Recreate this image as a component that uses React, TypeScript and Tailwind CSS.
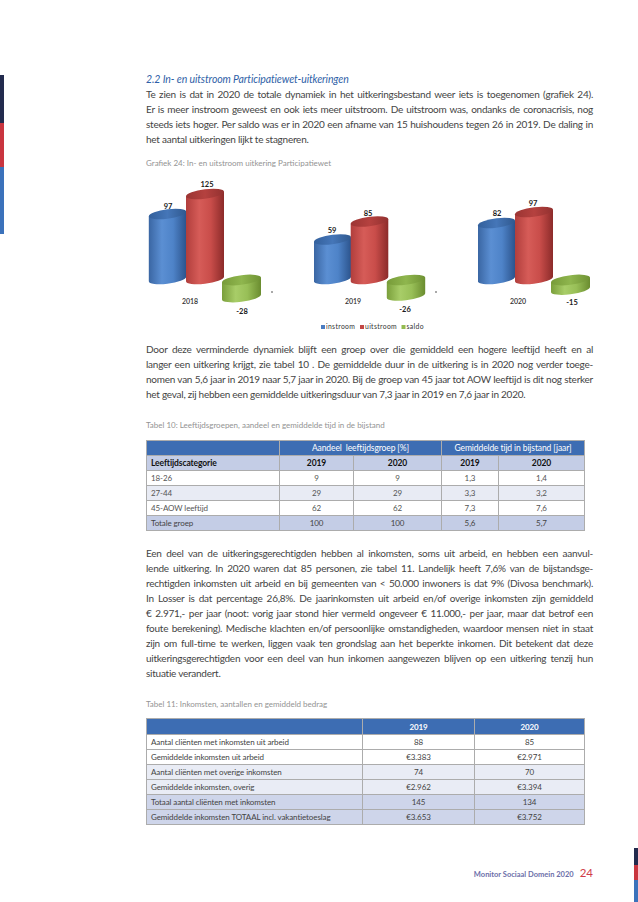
import React from "react";

const p1 = [
  "Te zien is dat in 2020 de totale dynamiek in het uitkeringsbestand weer iets is toegenomen (grafiek 24).",
  "Er is meer instroom geweest en ook iets meer uitstroom. De uitstroom was, ondanks de coronacrisis, nog",
  "steeds iets hoger. Per saldo was er in 2020 een afname van 15 huishoudens tegen 26 in 2019. De daling in",
  "het aantal uitkeringen lijkt te stagneren.",
];
const p2 = [
  "Door deze verminderde dynamiek blijft een groep over die gemiddeld een hogere leeftijd heeft en al",
  "langer een uitkering krijgt, zie tabel 10 . De gemiddelde duur in de uitkering is in 2020 nog verder toege-",
  "nomen van 5,6 jaar in 2019 naar 5,7 jaar in 2020. Bij de groep van 45 jaar tot AOW leeftijd is dit nog sterker",
  "het geval, zij hebben een gemiddelde uitkeringsduur van 7,3 jaar in 2019 en 7,6 jaar in 2020.",
];
const p3 = [
  "Een deel van de uitkeringsgerechtigden hebben al inkomsten, soms uit arbeid, en hebben een aanvul-",
  "lende uitkering. In 2020 waren dat 85 personen, zie tabel 11. Landelijk heeft 7,6% van de bijstandsge-",
  "rechtigden inkomsten uit arbeid en bij gemeenten van < 50.000 inwoners is dat 9% (Divosa benchmark).",
  "In Losser is dat percentage 26,8%. De jaarinkomsten uit arbeid en/of overige inkomsten zijn gemiddeld",
  "€ 2.971,- per jaar (noot: vorig jaar stond hier vermeld ongeveer € 11.000,- per jaar, maar dat betrof een",
  "foute berekening). Medische klachten en/of persoonlijke omstandigheden, waardoor mensen niet in staat",
  "zijn om full-time te werken, liggen vaak ten grondslag aan het beperkte inkomen. Dit betekent dat deze",
  "uitkeringsgerechtigden voor een deel van hun inkomen aangewezen blijven op een uitkering tenzij hun",
  "situatie verandert.",
];

function Para({ lines, className }: { lines: string[]; className?: string }) {
  return (
    <div className={"text-justify text-[10px] leading-[15px] tracking-[-0.25px] text-[#444444] " + (className ?? "")}>
      {lines.map((l, i) => (
        <span key={i} className={i < lines.length - 1 ? "block [text-align-last:justify]" : "block"}>
          {l}
        </span>
      ))}
    </div>
  );
}

type Kind = "b" | "r" | "g";

function Cyl({ cx, rx, top, bottom, kind }: { cx: number; rx: number; top: number; bottom: number; kind: Kind }) {
  const ry = 4.8;
  const my = (top + bottom) / 2;
  return (
    <g transform={`translate(${cx} ${my}) skewY(-7) translate(${-cx} ${-my})`}>
      <path
        d={`M${cx - rx} ${top} L${cx - rx} ${bottom} A${rx} ${ry} 0 0 0 ${cx + rx} ${bottom} L${cx + rx} ${top} Z`}
        fill={`url(#body-${kind})`}
      />
      <ellipse cx={cx} cy={top} rx={rx} ry={ry} fill={`url(#top-${kind})`} />
    </g>
  );
}

function Chart() {
  const val = "font-bold";
  return (
    <svg width="449" height="174" viewBox="0 0 449 174" className="block">
      <defs>
        <linearGradient id="body-b" x1="0" x2="1" y1="0" y2="0">
          <stop offset="0" stopColor="#3a66a3" />
          <stop offset="0.35" stopColor="#5b8fd3" />
          <stop offset="0.65" stopColor="#4e83c8" />
          <stop offset="1" stopColor="#2c548d" />
        </linearGradient>
        <linearGradient id="top-b" x1="0" x2="1" y1="0" y2="0">
          <stop offset="0" stopColor="#33609c" />
          <stop offset="0.5" stopColor="#4576b8" />
          <stop offset="1" stopColor="#30598f" />
        </linearGradient>
        <linearGradient id="body-r" x1="0" x2="1" y1="0" y2="0">
          <stop offset="0" stopColor="#b13e3c" />
          <stop offset="0.35" stopColor="#d65c58" />
          <stop offset="0.65" stopColor="#c94d4a" />
          <stop offset="1" stopColor="#8c2b2a" />
        </linearGradient>
        <linearGradient id="top-r" x1="0" x2="1" y1="0" y2="0">
          <stop offset="0" stopColor="#9b3533" />
          <stop offset="0.5" stopColor="#b5413f" />
          <stop offset="1" stopColor="#923130" />
        </linearGradient>
        <linearGradient id="body-g" x1="0" x2="1" y1="0" y2="0">
          <stop offset="0" stopColor="#7a9f3b" />
          <stop offset="0.35" stopColor="#a8cd68" />
          <stop offset="0.65" stopColor="#98bf57" />
          <stop offset="1" stopColor="#6a8c2f" />
        </linearGradient>
        <linearGradient id="top-g" x1="0" x2="1" y1="0" y2="0">
          <stop offset="0" stopColor="#779b39" />
          <stop offset="0.5" stopColor="#8fb64e" />
          <stop offset="1" stopColor="#6f9234" />
        </linearGradient>
      </defs>

      {/* 2018 */}
      <Cyl cx={21.5} rx={18.7} top={46} bottom={111} kind="b" />
      <Cyl cx={59} rx={19} top={26} bottom={111} kind="r" />
      <Cyl cx={95.5} rx={19.5} top={112} bottom={129} kind="g" />
      {/* 2019 */}
      <Cyl cx={186.5} rx={18.5} top={71.5} bottom={111} kind="b" />
      <Cyl cx={223.5} rx={18.8} top={53.5} bottom={111} kind="r" />
      <Cyl cx={260} rx={19.2} top={112} bottom={127.5} kind="g" />
      {/* 2020 */}
      <Cyl cx={350.5} rx={18.5} top={55} bottom={111} kind="b" />
      <Cyl cx={388} rx={19} top={44} bottom={111} kind="r" />
      <Cyl cx={424.5} rx={19.5} top={112} bottom={121.5} kind="g" />

      <g fontSize="7.5" fill="#1a1a1a" textAnchor="middle" style={{ fontFamily: "Lato, sans-serif" }}>
        <text x="22" y="40.5" className={val}>97</text>
        <text x="61" y="18.5" className={val}>125</text>
        <text x="96" y="145.5" className={val}>-28</text>
        <text x="186" y="64.5" className={val}>59</text>
        <text x="222" y="47.5" className={val}>85</text>
        <text x="259" y="143.5" className={val}>-26</text>
        <text x="351" y="47.5" className={val}>82</text>
        <text x="387" y="37.5" className={val}>97</text>
        <text x="426" y="136.5" className={val}>-15</text>
        <g fill="#333333" fontSize="7" className="font-semibold">
          <text x="44" y="135.5">2018</text>
          <text x="207" y="135.5">2019</text>
          <text x="372" y="135.5">2020</text>
        </g>
      </g>
      <rect x="125.5" y="123" width="1" height="2" fill="#555" />
      <rect x="289.5" y="123" width="1" height="2" fill="#555" />

      {/* legend */}
      <g fontSize="6.8" fill="#333" style={{ fontFamily: "Lato, sans-serif", letterSpacing: "0.35px" }}>
        <rect x="175" y="157" width="4" height="4" fill="#4a7cc2" />
        <text x="180" y="161.3">instroom</text>
        <rect x="214" y="157" width="4" height="4" fill="#c34644" />
        <text x="219" y="161.3">uitstroom</text>
        <rect x="255.5" y="157" width="4" height="4" fill="#93bb50" />
        <text x="260.5" y="161.3">saldo</text>
      </g>
    </svg>
  );
}

const cell = "border border-[#acacac] p-0 h-[15px] leading-[14px] align-middle";

function Table10() {
  const rows = [
    ["18-26", "9", "9", "1,3", "1,4"],
    ["27-44", "29", "29", "3,3", "3,2"],
    ["45-AOW leeftijd", "62", "62", "7,3", "7,6"],
  ];
  const rowBg = ["bg-white", "bg-[#e8ebf4]", "bg-white"];
  return (
    <table className="table-fixed w-[438px] border-collapse text-[8px] tracking-[-0.1px]">
      <colgroup>
        <col className="w-[133px]" />
        <col className="w-[74px]" />
        <col className="w-[88px]" />
        <col className="w-[57px]" />
        <col className="w-[86px]" />
      </colgroup>
      <tbody>
        <tr className="bg-[#3d6db3] text-white">
          <td className={cell}></td>
          <td colSpan={2} className={cell + " text-center text-[8.5px]"}>Aandeel&nbsp; leeftijdsgroep [%]</td>
          <td colSpan={2} className={cell + " text-center text-[8.5px]"}>Gemiddelde tijd in bijstand [jaar]</td>
        </tr>
        <tr className="bg-[#c4cde6] text-[#111] font-bold text-[8.5px]">
          <td className={cell + " pl-[4px]"}>Leeftijdscategorie</td>
          <td className={cell + " text-center"}>2019</td>
          <td className={cell + " text-center"}>2020</td>
          <td className={cell + " text-center"}>2019</td>
          <td className={cell + " text-center"}>2020</td>
        </tr>
        {rows.map((r, i) => (
          <tr key={i} className={rowBg[i] + " text-[#555]"}>
            <td className={cell + " pl-[4px]"}>{r[0]}</td>
            {r.slice(1).map((v, j) => (
              <td key={j} className={cell + " text-center"}>{v}</td>
            ))}
          </tr>
        ))}
        <tr className="bg-[#c4cde6] text-[#444]">
          <td className={cell + " pl-[4px]"}>Totale groep</td>
          <td className={cell + " text-center"}>100</td>
          <td className={cell + " text-center"}>100</td>
          <td className={cell + " text-center"}>5,6</td>
          <td className={cell + " text-center"}>5,7</td>
        </tr>
      </tbody>
    </table>
  );
}

function Table11() {
  const rows: [string, string, string, string][] = [
    ["Aantal cliënten met inkomsten uit arbeid", "88", "85", "bg-white"],
    ["Gemiddelde inkomsten uit arbeid", "€3.383", "€2.971", "bg-white"],
    ["Aantal cliënten met overige inkomsten", "74", "70", "bg-[#e9ecf5]"],
    ["Gemiddelde inkomsten, overig", "€2.962", "€3.394", "bg-[#e9ecf5]"],
    ["Totaal aantal cliënten met inkomsten", "145", "134", "bg-[#ced5ea]"],
    ["Gemiddelde inkomsten TOTAAL incl. vakantietoeslag", "€3.653", "€3.752", "bg-[#ced5ea]"],
  ];
  return (
    <table className="table-fixed w-[438px] border-collapse text-[8px] tracking-[-0.1px]">
      <colgroup>
        <col className="w-[216px]" />
        <col className="w-[112px]" />
        <col className="w-[110px]" />
      </colgroup>
      <tbody>
        <tr className="bg-[#3d6db3] text-white font-bold">
          <td className={cell + " h-[16px]"}></td>
          <td className={cell + " h-[16px] text-center"}>2019</td>
          <td className={cell + " h-[16px] text-center"}>2020</td>
        </tr>
        {rows.map((r, i) => (
          <tr key={i} className={r[3] + " text-[#444]"}>
            <td className={cell + " pl-[4px]"}>{r[0]}</td>
            <td className={cell + " text-center"}>{r[1]}</td>
            <td className={cell + " text-center"}>{r[2]}</td>
          </tr>
        ))}
      </tbody>
    </table>
  );
}

export default function App() {
  return (
    <div className="w-[638px] h-[902px] bg-white flex flex-col overflow-hidden [font-family:Lato,sans-serif]">
      <div className="flex flex-1 min-h-0">
        <div className="w-[4px] pt-[75px] flex flex-col shrink-0">
          <div className="h-[48px] bg-[#232b4e]" />
          <div className="h-[44px] bg-[#c9353f]" />
          <div className="h-[67px] bg-[#3b72bb]" />
        </div>
        <div className="ml-[142px] w-[447px] pt-[72px] flex flex-col">
          <h2 className="italic text-[10.5px] leading-[15px] tracking-[-0.1px] text-[#2f5fa7] font-normal">
            2.2 In- en uitstroom Participatiewet-uitkeringen
          </h2>
          <Para lines={p1} />
          <div className="mt-[11px] text-[8px] leading-[10px] text-[#939393]">
            Grafiek 24: In- en uitstroom uitkering Participatiewet
          </div>
          <Chart />
          <Para lines={p2} />
          <div className="mt-[18px] text-[8px] leading-[10px] text-[#939393]">
            Tabel 10: Leeftijdsgroepen, aandeel en gemiddelde tijd in de bijstand
          </div>
          <div className="mt-[10px]">
            <Table10 />
          </div>
          <Para lines={p3} className="mt-[15px]" />
          <div className="mt-[18px] text-[8px] leading-[10px] text-[#939393]">
            Tabel 11: Inkomsten, aantallen en gemiddeld bedrag
          </div>
          <div className="mt-[9px]">
            <Table11 />
          </div>
        </div>
      </div>
      <div className="flex h-[54px] justify-end shrink-0">
        <div className="self-center flex items-baseline gap-[6px] mr-[41px] -mt-[4px]">
          <span className="text-[7.5px] font-bold text-[#6c6fa9]">Monitor Sociaal Domein 2020</span>
          <span className="text-[11.5px] text-[#d03c48]">24</span>
        </div>
        <div className="w-[4px] flex flex-col">
          <div className="h-[17px] bg-[#232b4e]" />
          <div className="h-[15px] bg-[#c9353f]" />
          <div className="flex-1 bg-[#3b72bb]" />
        </div>
      </div>
    </div>
  );
}
